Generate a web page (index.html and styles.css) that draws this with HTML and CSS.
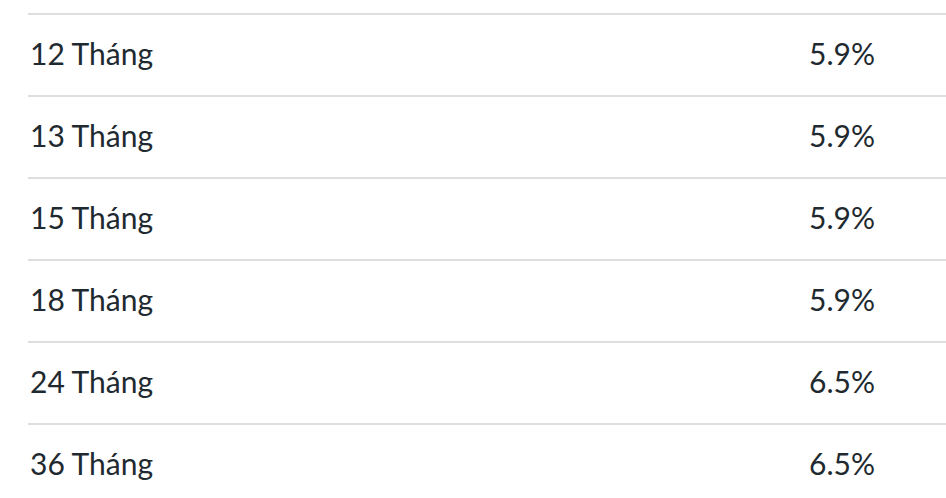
FILE: index.html
```html
<!DOCTYPE html>
<html lang="vi">
<head>
<meta charset="utf-8">
<link rel="stylesheet" href="styles.css">
</head>
<body>
<div class="rates">
  <div class="row"><span class="term">12 Tháng</span><span class="rate">5.9%</span></div>
  <div class="row"><span class="term">13 Tháng</span><span class="rate">5.9%</span></div>
  <div class="row"><span class="term">15 Tháng</span><span class="rate">5.9%</span></div>
  <div class="row"><span class="term">18 Tháng</span><span class="rate">5.9%</span></div>
  <div class="row"><span class="term">24 Tháng</span><span class="rate">6.5%</span></div>
  <div class="row"><span class="term">36 Tháng</span><span class="rate">6.5%</span></div>
</div>
</body>
</html>
```
FILE: styles.css
```css
html, body {
  margin: 0;
  padding: 0;
  background: #ffffff;
  overflow: hidden;
}
body {
  font-family: Lato, "Noto Sans", sans-serif;
  color: #1f2a30;
}
.rates {
  margin: 13px 0 0 28px;
  display: flex;
  flex-direction: column;
}
.row {
  display: grid;
  grid-template-columns: 780px 1fr;
  align-items: center;
  height: 80px;
  border-top: 2px solid #dedede;
  font-size: 30px;
  line-height: 36px;
}
.term {
  padding-left: 2px;
  margin-top: -4px;
}
.rate {
  padding-left: 1px;
  margin-top: -4px;
}
```
